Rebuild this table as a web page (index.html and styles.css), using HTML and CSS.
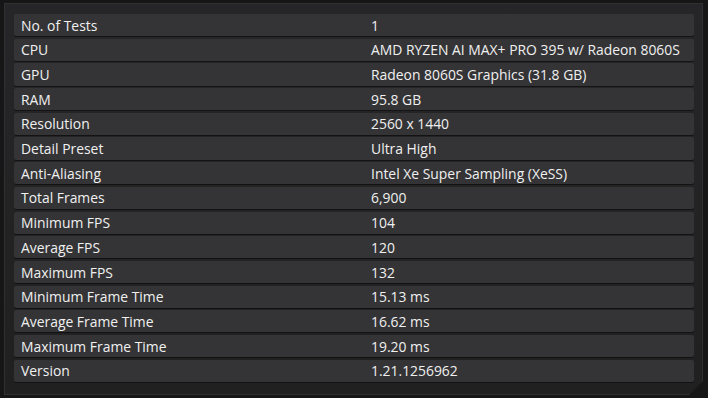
FILE: index.html
```html
<!DOCTYPE html>
<html>
<head>
<meta charset="utf-8">
<link rel="stylesheet" href="styles.css">
</head>
<body>
<div class="panel">
  <div class="row"><span class="label">No. of Tests</span><span class="value">1</span></div>
  <div class="row"><span class="label">CPU</span><span class="value">AMD RYZEN AI MAX+ PRO 395 w/ Radeon 8060S</span></div>
  <div class="row"><span class="label">GPU</span><span class="value">Radeon 8060S Graphics (31.8 GB)</span></div>
  <div class="row"><span class="label">RAM</span><span class="value">95.8 GB</span></div>
  <div class="row"><span class="label">Resolution</span><span class="value">2560 x 1440</span></div>
  <div class="row"><span class="label">Detail Preset</span><span class="value">Ultra High</span></div>
  <div class="row"><span class="label">Anti-Aliasing</span><span class="value">Intel Xe Super Sampling (XeSS)</span></div>
  <div class="row"><span class="label">Total Frames</span><span class="value">6,900</span></div>
  <div class="row"><span class="label">Minimum FPS</span><span class="value">104</span></div>
  <div class="row"><span class="label">Average FPS</span><span class="value">120</span></div>
  <div class="row"><span class="label">Maximum FPS</span><span class="value">132</span></div>
  <div class="row"><span class="label">Minimum Frame Time</span><span class="value">15.13 ms</span></div>
  <div class="row"><span class="label">Average Frame Time</span><span class="value">16.62 ms</span></div>
  <div class="row"><span class="label">Maximum Frame Time</span><span class="value">19.20 ms</span></div>
  <div class="row"><span class="label">Version</span><span class="value">1.21.1256962</span></div>
</div>
</body>
</html>
```
FILE: styles.css
```css
html, body {
  margin: 0;
  padding: 0;
  background: #161616;
  width: 708px;
  height: 398px;
  overflow: hidden;
}
body {
  padding: 3px 5px 0 4px;
  box-sizing: border-box;
  font-family: "Open Sans", sans-serif;
  font-size: 13.9px;
  color: #f0f0f0;
}
.panel {
  height: 392px;
  box-sizing: border-box;
  padding: 10px 8px 0 9px;
  background: linear-gradient(180deg, #262628 0%, #202020 100%);
  border: 1px solid #303034;
  clip-path: polygon(0 0, 100% 0, 100% calc(100% - 14px), calc(100% - 14px) 100%, 0 100%);
  display: flex;
  flex-direction: column;
  gap: 2.5px;
}
.row {
  height: 22.2px;
  flex: none;
  display: grid;
  grid-template-columns: 357px 1fr;
  align-items: center;
  background: #343436;
  border-radius: 2px;
  box-shadow: 0 1px 0 rgba(0,0,0,0.45);
  line-height: 1;
  padding-top: 1px;
  box-sizing: border-box;
}
.label {
  padding-left: 7px;
}
.value {
  padding-left: 0;
}
```
